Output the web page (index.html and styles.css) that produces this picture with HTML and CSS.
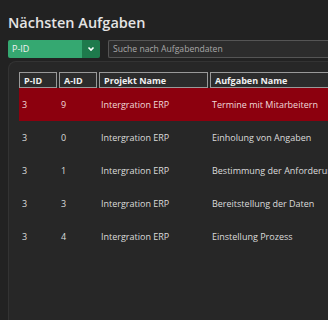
FILE: index.html
```html
<!DOCTYPE html>
<html lang="de">

<head>
    <meta charset="UTF-8">
    <meta name="viewport" content="width=device-width, initial-scale=1.0">
    <title>Aufgaben</title>
    <link rel="stylesheet" href="styles.css">
</head>

<body>
    <h1 class="title">Nächsten Aufgaben</h1>

    <div class="filter">
        <div class="select">
            <span class="select-value">P-ID</span>
            <span class="select-arrow">
                <svg width="8" height="6" viewBox="0 0 8 6">
                    <path d="M1.5 1.5 L4 4 L6.5 1.5" fill="none" stroke="#fff" stroke-width="1.6" />
                </svg>
            </span>
        </div>
        <input class="search" type="text" placeholder="Suche nach Aufgabendaten">
    </div>

    <div class="card">
        <table class="tasks">
            <thead>
                <tr>
                    <th class="col-pid">P-ID</th>
                    <th class="col-aid">A-ID</th>
                    <th class="col-proj">Projekt Name</th>
                    <th class="col-task">Aufgaben Name</th>
                </tr>
            </thead>
            <tbody>
                <tr class="active">
                    <td>3</td>
                    <td>9</td>
                    <td>Intergration ERP</td>
                    <td>Termine mit Mitarbeitern</td>
                </tr>
                <tr>
                    <td>3</td>
                    <td>0</td>
                    <td>Intergration ERP</td>
                    <td>Einholung von Angaben</td>
                </tr>
                <tr>
                    <td>3</td>
                    <td>1</td>
                    <td>Intergration ERP</td>
                    <td>Bestimmung der Anforderungen</td>
                </tr>
                <tr>
                    <td>3</td>
                    <td>3</td>
                    <td>Intergration ERP</td>
                    <td>Bereitstellung der Daten</td>
                </tr>
                <tr>
                    <td>3</td>
                    <td>4</td>
                    <td>Intergration ERP</td>
                    <td>Einstellung Prozess</td>
                </tr>
            </tbody>
        </table>
    </div>
</body>

</html>
```

FILE: styles.css
```css
/* page */
body {
    margin: 0;
    padding: 0 0 0 8px;
    height: 320px;
    background-color: #222222;
    color: #e0e0e0;
    font-family: "Open Sans", "Noto Sans", sans-serif;
    overflow: hidden;
}

.title {
    margin: 0;
    padding-top: 13px;
    font-size: 14.5px;
    line-height: 20px;
    font-weight: 600;
    color: #e4e4e4;
}

/* filter bar */
.filter {
    display: flex;
    gap: 8px;
    margin-top: 7px;
    height: 18px;
}

.select {
    display: flex;
    width: 92px;
    flex: none;
    border-radius: 2px;
    overflow: hidden;
}

.select-value {
    flex: 1;
    background-color: #35a871;
    color: #f2f2f2;
    font-size: 9px;
    line-height: 18px;
    padding-left: 4px;
}

.select-arrow {
    width: 18px;
    background-color: #1e7a4c;
    display: flex;
    align-items: center;
    justify-content: center;
}

.search {
    flex: 1;
    min-width: 0;
    margin: 0;
    padding: 0 4px;
    height: 18px;
    box-sizing: border-box;
    border: 1px solid #555;
    border-right: none;
    border-radius: 2px 0 0 2px;
    background-color: #2c2c2c;
    color: #ccc;
    font-family: inherit;
    font-size: 8.6px;
}

.search::placeholder {
    color: #a8a8a8;
}

/* card with table */
.card {
    margin-top: 3px;
    height: 300px;
    border: 1px solid #333;
    border-right: none;
    border-radius: 8px 0 0 0;
    background-color: #272727;
    padding: 10px 0 0 10px;
}

.tasks {
    border-collapse: separate;
    border-spacing: 0;
    font-size: 9px;
    white-space: nowrap;
    width: 360px;
    table-layout: fixed;
}

/* header cells: 1px frame with a 2px gap between them */
.tasks th {
    text-align: left;
    font-weight: 700;
    color: #f0f0f0;
    background-color: #2c2c2c;
    background-clip: padding-box;
    border-left: 2px solid #272727;
    box-shadow: inset 0 0 0 1px #9a9a9a;
    height: 16px;
    padding: 0 4px 0 5px;
}

.tasks th:first-child {
    border-left: none;
}

.col-pid { width: 29px; }
.col-aid { width: 29px; }
.col-proj { width: 100px; }

.tasks td {
    height: 33px;
    padding: 0 0 0 4px;
    color: #dcdcdc;
    overflow: hidden;
}

.tasks td:first-child {
    padding-left: 3px;
}

.tasks tr.active td {
    background-color: #8c000e;
    color: #f0dada;
}
```
